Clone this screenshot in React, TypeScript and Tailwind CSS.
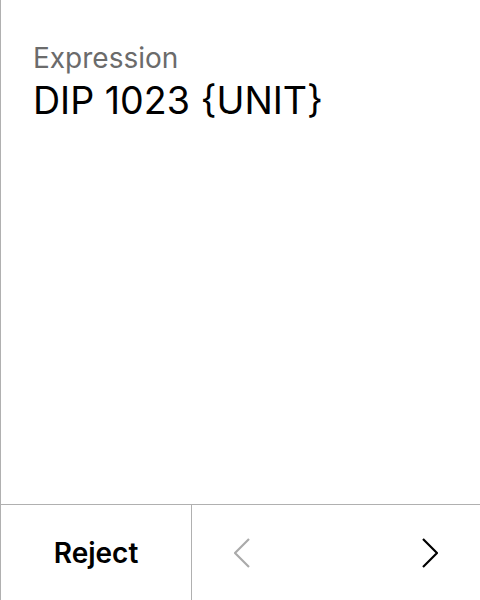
import React from "react";

function Chevron({ dir, color }: { dir: "left" | "right"; color: string }) {
  const pts = dir === "left" ? "15,1 1,15 15,29" : "1,1 15,15 1,29";
  return (
    <svg width="16" height="30" viewBox="0 0 16 30" fill="none">
      <polyline points={pts} stroke={color} strokeWidth="2.2" strokeLinecap="butt" strokeLinejoin="miter" />
    </svg>
  );
}

export default function App() {
  return (
    <div
      className="w-[480px] h-[600px] flex flex-col bg-white border-l border-[#b0b0b0]"
      style={{ fontFamily: "Inter, 'Noto Sans', sans-serif" }}
    >
      <div className="flex-1 pl-[32px] pt-[41px]">
        <div className="text-[28px] leading-[34px] text-[#6b6b6b]">Expression</div>
        <div className="mt-[3px] text-[37.6px] leading-[46px] text-black">DIP 1023 {"{UNIT}"}</div>
      </div>
      <div className="h-[96px] flex border-t border-[#b0b0b0]">
        <div className="w-[191px] flex items-center justify-center border-r border-[#b0b0b0]">
          <span className="text-[28px] font-semibold text-black">Reject</span>
        </div>
        <div className="flex-1 flex items-center justify-between pl-[42px] pr-[42px]">
          <Chevron dir="left" color="#aaaaaa" />
          <Chevron dir="right" color="#000000" />
        </div>
      </div>
    </div>
  );
}
